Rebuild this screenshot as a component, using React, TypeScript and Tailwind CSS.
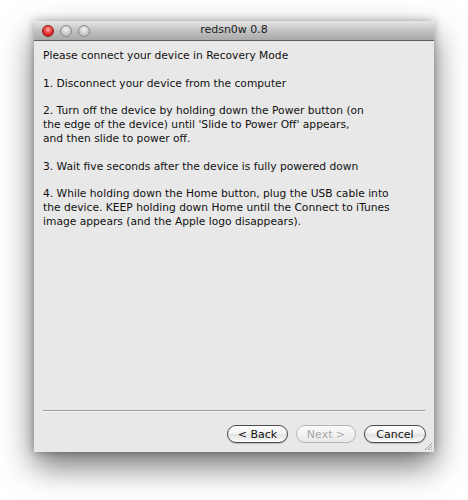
import React from 'react';

const paragraphs: string[][] = [
  ['Please connect your device in Recovery Mode'],
  ['1. Disconnect your device from the computer'],
  [
    '2. Turn off the device by holding down the Power button (on',
    "the edge of the device) until 'Slide to Power Off' appears,",
    'and then slide to power off.',
  ],
  ['3. Wait five seconds after the device is fully powered down'],
  [
    '4. While holding down the Home button, plug the USB cable into',
    'the device. KEEP holding down Home until the Connect to iTunes',
    'image appears (and the Apple logo disappears).',
  ],
];

const TrafficLight: React.FC<{ red?: boolean }> = ({ red }) => (
  <div
    className={`w-[12px] h-[12px] rounded-full border ${
      red
        ? 'border-[#8c1a1a] bg-[radial-gradient(circle_at_50%_35%,#ffb0b0_0%,#f03c3c_45%,#b01010_100%)]'
        : 'border-[#8a8a8a] bg-[radial-gradient(circle_at_50%_35%,#f4f4f4_0%,#cfcfcf_50%,#a8a8a8_100%)]'
    }`}
  />
);

const Button: React.FC<{ label: string; disabled?: boolean; width: string }> = ({ label, disabled, width }) => (
  <button
    className={`${width} h-[18px] rounded-full border text-[11px] leading-none flex items-center justify-center ${
      disabled
        ? 'border-[#b5b5b5] text-[#a8a8a8] bg-[linear-gradient(#fbfbfb,#e9e9e9)]'
        : 'border-[#4a4a4a] text-[#111] bg-[linear-gradient(#ffffff,#f2f2f2_50%,#e2e2e2_51%,#fafafa)] shadow-[0_1px_1px_rgba(0,0,0,0.2)]'
    }`}
  >
    {label}
  </button>
);

const App: React.FC = () => {
  return (
    <div
      className="w-[468px] h-[500px] bg-white pl-[34px] pt-[21px]"
      style={{ fontFamily: '"Lucida Grande", "DejaVu Sans", sans-serif' }}
    >
      <div className="relative w-[400px] h-[431px] flex flex-col bg-[#e8e8e8] shadow-[0_14px_30px_rgba(0,0,0,0.55),0_0_8px_rgba(0,0,0,0.3)]">
        {/* Title bar */}
        <div className="relative h-[20px] flex items-center bg-[linear-gradient(#e6e6e6,#bdbdbd_60%,#a9a9a9)] border-b border-[#5f5f5f] rounded-t-[4px]">
          <div className="flex gap-[6px] pl-[8px]">
            <TrafficLight red />
            <TrafficLight />
            <TrafficLight />
          </div>
          <div className="absolute inset-0 flex items-center justify-center text-[11px] text-[#1a1a1a]">
            redsn0w 0.8
          </div>
        </div>

        {/* Content */}
        <div className="flex-1 pl-[9px] pt-[8px] text-[10.7px] leading-[14px] text-[#111]">
          {paragraphs.map((lines, i) => (
            <div key={i} className="mb-[13.5px]">
              {lines.map((line, j) => (
                <div key={j}>{line}</div>
              ))}
            </div>
          ))}
        </div>

        {/* Separator */}
        <div className="mx-[9px] border-t border-[#9c9c9c] border-b border-b-[#f6f6f6]" />

        {/* Buttons */}
        <div className="flex justify-end gap-[8px] pr-[8px] pt-[13px] pb-[9px]">
          <Button label="< Back" width="w-[61px]" />
          <Button label="Next >" disabled width="w-[60px]" />
          <Button label="Cancel" width="w-[62px]" />
        </div>

        {/* Resize grip */}
        <svg className="absolute right-[1px] bottom-[1px]" width="10" height="10" viewBox="0 0 10 10">
          <path d="M9 2 L2 9 M9 5 L5 9 M9 8 L8 9" stroke="#9a9a9a" strokeWidth="1" />
        </svg>
      </div>
    </div>
  );
};

export default App;
